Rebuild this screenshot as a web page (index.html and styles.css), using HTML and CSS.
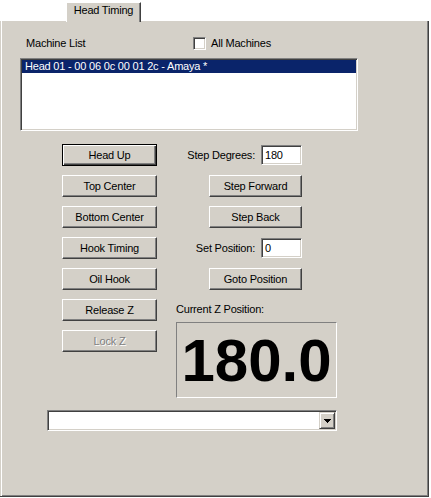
FILE: index.html
```html
<!DOCTYPE html>
<html>
<head>
<meta charset="utf-8">
<title>Head Timing</title>
<link rel="stylesheet" href="styles.css">
</head>
<body>
<div class="window">
  <div class="tabstrip">
    <div class="tab">Head Timing</div>
  </div>
  <div class="panel">
    <div class="list-header">
      <span class="list-label">Machine List</span>
      <label class="check"><span class="checkbox"></span><span>All Machines</span></label>
    </div>
    <div class="listbox">
      <div class="item selected">Head 01 - 00 06 0c 00 01 2c - Amaya *</div>
    </div>
    <div class="controls">
      <div class="col-left">
        <button class="btn default">Head Up</button>
        <button class="btn">Top Center</button>
        <button class="btn">Bottom Center</button>
        <button class="btn">Hook Timing</button>
        <button class="btn">Oil Hook</button>
        <button class="btn">Release Z</button>
        <button class="btn" disabled>Lock Z</button>
      </div>
      <div class="col-right">
        <div class="rows">
          <div class="row"><span class="field-label">Step Degrees:</span><span class="textbox">180</span></div>
          <div class="row"><button class="btn btn-wide">Step Forward</button></div>
          <div class="row"><button class="btn btn-wide">Step Back</button></div>
          <div class="row"><span class="field-label">Set Position:</span><span class="textbox">0</span></div>
          <div class="row"><button class="btn btn-wide">Goto Position</button></div>
        </div>
        <div class="z-label">Current Z Position:</div>
        <div class="z-display">180.0</div>
      </div>
    </div>
    <div class="combo">
      <div class="combo-inner">
        <span class="combo-text"></span>
        <span class="combo-btn">
          <svg width="7" height="4" viewBox="0 0 7 4" shape-rendering="crispEdges">
            <rect x="0" y="0" width="7" height="1" fill="#000"/>
            <rect x="1" y="1" width="5" height="1" fill="#000"/>
            <rect x="2" y="2" width="3" height="1" fill="#000"/>
            <rect x="3" y="3" width="1" height="1" fill="#000"/>
          </svg>
        </span>
      </div>
    </div>
  </div>
</div>
</body>
</html>
```

FILE: styles.css
```css
* {
  box-sizing: border-box;
}

html,
body {
  margin: 0;
  padding: 0;
  background: #fff;
}

body {
  width: 431px;
  height: 498px;
  overflow: hidden;
  font: 11px/13px "Liberation Sans", Arial, sans-serif;
  letter-spacing: -0.2px;
  color: #000;
}

.tabstrip {
  height: 21px;
  padding: 2px 0 0 66px;
  display: flex;
}

.tab {
  position: relative;
  z-index: 1;
  width: 75px;
  height: 20px;
  background: #d4d0c8;
  border-left: 1px solid #fff;
  border-top: 1px solid #fff;
  border-right: 1px solid #404040;
  box-shadow: inset -1px 0 #808080;
  display: flex;
  justify-content: center;
  padding-top: 1px;
}

.panel {
  width: 429px;
  height: 476px;
  background: #d4d0c8;
  border-right: 1px solid #404040;
  border-bottom: 1px solid #404040;
  box-shadow: inset 1px 0 #d4d0c8, inset 2px 0 #fff, inset -1px -1px #808080;
  padding-top: 16px;
}

.list-header {
  display: flex;
  align-items: center;
  height: 13px;
  padding-left: 26px;
}

.list-label {
  width: 167px;
}

.check {
  display: flex;
  align-items: center;
  gap: 5px;
}

.checkbox {
  width: 13px;
  height: 13px;
  background: #fff;
  border: 1px solid;
  border-color: #808080 #fff #fff #808080;
  box-shadow: inset 1px 1px #404040, inset -1px -1px #d4d0c8;
}

.listbox {
  margin: 8px 0 0 20px;
  width: 338px;
  height: 73px;
  background: #fff;
  border: 1px solid;
  border-color: #808080 #fff #fff #808080;
  padding: 1px;
  box-shadow: inset 1px 1px #404040, inset -1px -1px #d4d0c8;
}

.item {
  height: 13px;
  padding-left: 3px;
  white-space: nowrap;
}

.item.selected {
  background: #0a246a;
  color: #fff;
}

.controls {
  display: flex;
  gap: 19px;
  margin-top: 13px;
  padding-left: 62px;
}

.col-left {
  display: flex;
  flex-direction: column;
  gap: 9px;
  width: 95px;
}

.btn {
  width: 95px;
  height: 22px;
  margin: 0;
  padding: 0;
  font: inherit;
  letter-spacing: inherit;
  color: #000;
  background: #d4d0c8;
  border: 1px solid;
  border-color: #fff #404040 #404040 #fff;
  box-shadow: inset -1px -1px #808080;
  border-radius: 0;
  text-align: center;
  display: flex;
  align-items: center;
  justify-content: center;
}

.btn.default {
  border-color: #000;
  box-shadow: inset 1px 1px #fff, inset -1px -1px #404040, inset -2px -2px #808080;
}

.btn:disabled {
  color: #808080;
  text-shadow: 1px 1px 0 #fff;
}

.btn-wide {
  width: 93px;
}

.col-right {
  width: 161px;
  display: flex;
  flex-direction: column;
}

.rows {
  display: flex;
  flex-direction: column;
  gap: 9px;
  width: 126px;
}

.row {
  height: 22px;
  display: flex;
  align-items: center;
  justify-content: flex-end;
}

.field-label {
  margin-right: 6px;
  white-space: nowrap;
}

.textbox {
  width: 41px;
  height: 20px;
  background: #fff;
  border: 1px solid;
  border-color: #808080 #fff #fff #808080;
  box-shadow: inset 1px 1px #404040, inset -1px -1px #d4d0c8;
  padding: 3px 0 0 3px;
  flex: none;
}

.z-label {
  margin-top: 13px;
  height: 13px;
  white-space: nowrap;
}

.z-display {
  margin-top: 6px;
  width: 161px;
  height: 76px;
  border: 1px solid;
  border-color: #808080 #fff #fff #808080;
  display: flex;
  align-items: center;
  justify-content: center;
  font: bold 60px/60px "Liberation Sans", Arial, sans-serif;
  letter-spacing: 0;
  padding-top: 2px;
}

.combo {
  margin: 12px 0 0 47px;
  width: 290px;
  height: 21px;
  border: 1px solid;
  border-color: #808080 #fff #fff #808080;
  padding: 1px;
  box-shadow: inset 1px 1px #404040, inset -1px -1px #d4d0c8;
}

.combo-inner {
  height: 100%;
  background: #fff;
  display: flex;
}

.combo-text {
  flex: 1;
}

.combo-btn {
  width: 16px;
  height: 17px;
  background: #d4d0c8;
  border: 1px solid;
  border-color: #d4d0c8 #404040 #404040 #d4d0c8;
  box-shadow: inset 1px 1px #fff, inset -1px -1px #808080;
  display: flex;
  align-items: center;
  justify-content: center;
  padding-left: 1px;
}

.combo-btn svg {
  display: block;
}
```
